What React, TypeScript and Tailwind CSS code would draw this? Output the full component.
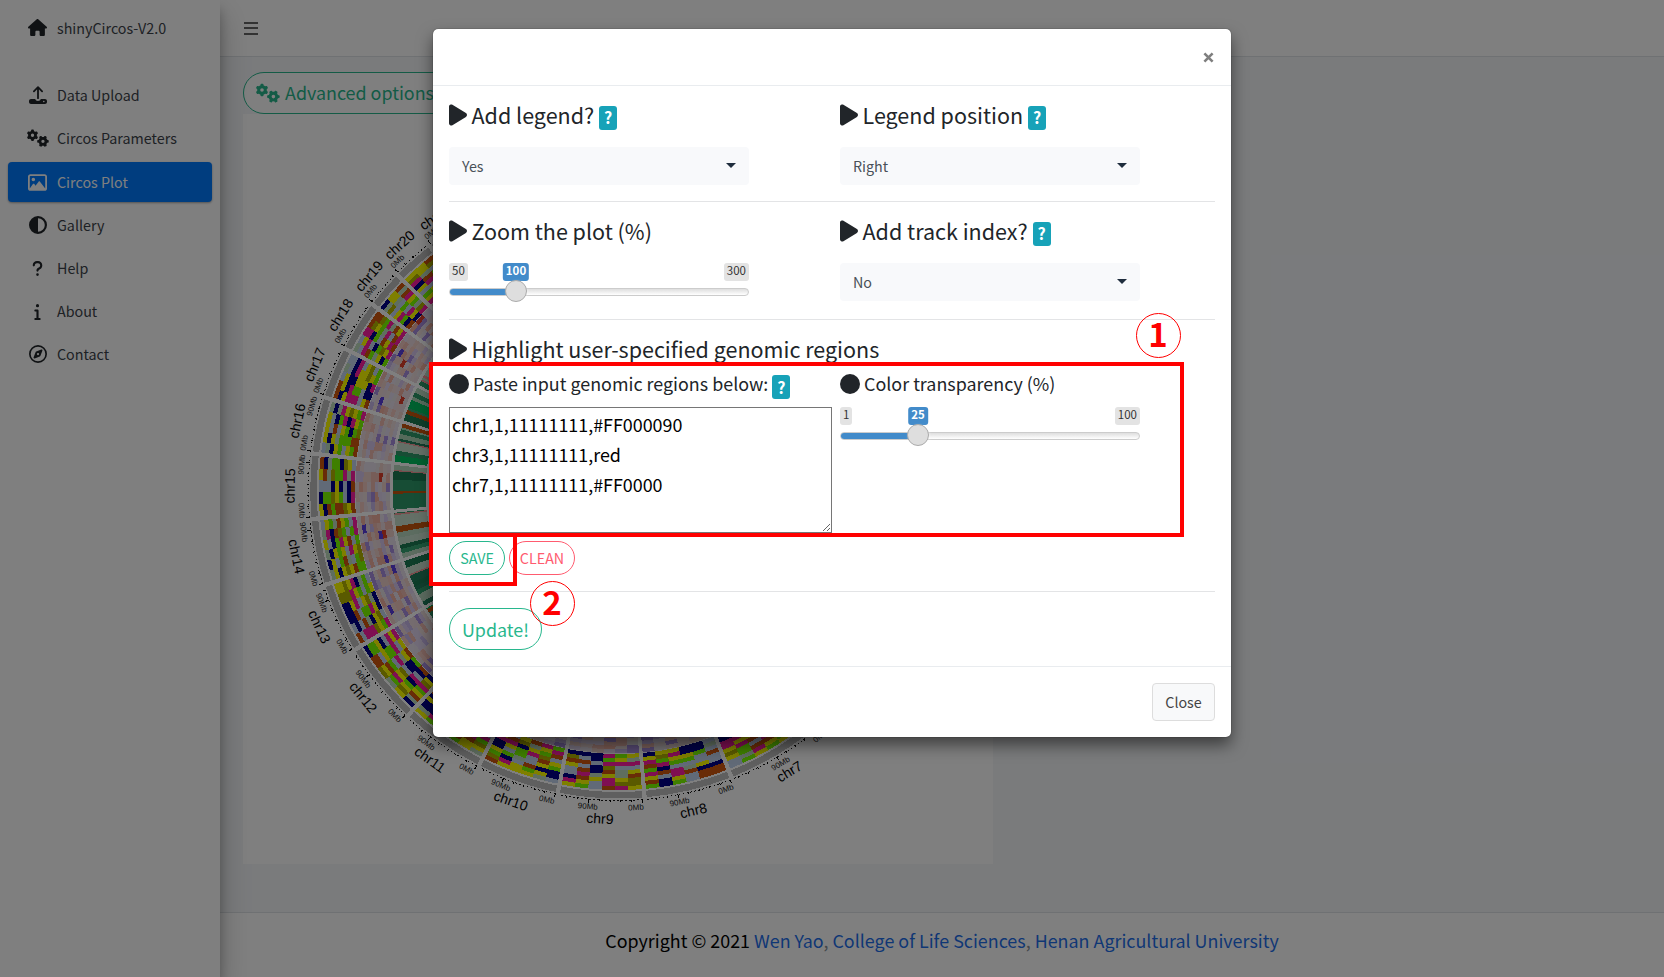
import React from "react";
import {
  FaHouse, FaGears, FaRegImage, FaCircleHalfStroke, FaQuestion, FaInfo, FaRegCompass, FaPlay, FaCircle,
} from "react-icons/fa6";

/* ---------- circos plot ---------- */

const CX = 375.8;
const CY = 376;
const COLORS: Record<string, string> = {
  Y: "#ffff00", O: "#b5b500", G: "#7fff00", M: "#ff1fa5", N: "#00008b", B: "#d2590f", L: "#c3d5ee", S: "#bfdcbf",
};

type Chr = { name: string; from: number; to: number; cells: string[]; long?: boolean };

/* each string is one column of the block track, from the rim inwards; columns run clockwise */
const CHROMOSOMES: Chr[] = [
  { name: "chr7", from: 49, to: 68.6, long: true, cells: ["YOGMBYLNG", "OYGBMLYNS", "YGBMOYLGN", "GYBMLOYGM", "YMBLBYMOG", "GSGGMYMNN", "LLYOYMMNN"] },
  { name: "chr8", from: 68.6, to: 85.2, long: true, cells: ["BBNLLBLSL", "BBNYLLGNN", "LLBSLGYNN", "GYMMLGYMY", "NNLBNMGOY", "GBYMGBMYN"] },
  { name: "chr9", from: 85.2, to: 101.4, long: true, cells: ["YOOBYLMSY", "MOYSSLMYG", "BMMYBOMGM", "LLYSNNLNN", "GYBMBLBLN", "YMNLLYBON"] },
  { name: "chr10", from: 101.4, to: 116.9, long: true, cells: ["LNNGYLBMG", "SYNYBOGYM", "YGBLLMYSB", "YYLSGGNOY", "YMNGLYMBL", "BOGYNNMYL"] },
  { name: "chr11", from: 116.9, to: 133.1, long: true, cells: ["SYOGMLYBN", "YYBMLGYOM", "GBBLYMNGL", "YOLNBMGYS", "GMNYLOBMG", "YSNNYNBGY"] },
  { name: "chr12", from: 133.1, to: 148.8, long: true, cells: ["NSBYGMOYN", "YOYGNMLNB", "SGMYOLNNG", "OYBGLMSYB", "BBLYGGMLY", "NGGYNLMYM"] },
  { name: "chr13", from: 148.8, to: 162.1, long: true, cells: ["BLMMMOYGM", "LNLBSNYOL", "NNBLGGMYN", "NNYMLYOSN", "OOOMYGLGY", "YYOYMNSGL"] },
  { name: "chr14", from: 162.1, to: 174.6, long: true, cells: ["SYNYOYBGG", "NYLGBSLGO", "SNYGYLMYO", "YLNGMYBLG", "SMNBOGLGM", "LYGSBYGLM"] },
  { name: "chr15", from: 174.6, to: 186.8, long: true, cells: ["YNBGBBOYB", "NGGOYGLNM", "LLLNYNLNB", "YBSOGGMSM", "BNSGGNOYL"] },
  { name: "chr16", from: 186.8, to: 197.5, long: true, cells: ["LSNYGLYGB", "YNYSGGGBB", "YLBLYGNGO", "YLNGMNMYG", "SNSMYOYGM"] },
  { name: "chr17", from: 197.5, to: 207.3, cells: ["BNYMMMLYB", "BYNMGGLNN", "LYNNYYYNM", "SLNMYYOYG", "LLNMLYOLG"] },
  { name: "chr18", from: 207.3, to: 217, cells: ["SLMBGSYNG", "LYMLNGOYM", "MMNGLBYMB", "BOYGSMLBM", "BBOGMSBYM"] },
  { name: "chr19", from: 217, to: 224.2, cells: ["NSOLYMGNB", "YYSLGLMYN", "BSBMYGSOM"] },
  { name: "chr20", from: 224.2, to: 232.2, cells: ["YOMNYLGYM", "YYSBMLYGO", "BOLGYBMSY"] },
  { name: "chr21", from: 232.2, to: 240, cells: ["GYMNBLYGO", "YSMGNLBYM"] },
];

const RAD = Math.PI / 180;
const pt = (r: number, a: number) => `${(CX + r * Math.cos(a * RAD)).toFixed(2)} ${(CY + r * Math.sin(a * RAD)).toFixed(2)}`;
const wedge = (r0: number, r1: number, a0: number, a1: number) =>
  `M${pt(r1, a0)}A${r1} ${r1} 0 0 1 ${pt(r1, a1)}L${pt(r0, a1)}A${r0} ${r0} 0 0 0 ${pt(r0, a0)}Z`;

function random(seed: number) {
  let s = seed;
  return () => {
    s = (s * 16807) % 2147483647;
    return s / 2147483647;
  };
}

const HEAT = ["#efd9d9", "#e8e0ec", "#f3c9c0", "#e2d6f0", "#eebbb0", "#d8c8ee", "#ead9df", "#ecdcdc", "#f0b0a0", "#c9b8ea", "#e6e0e4", "#efd0cb", "#e4dcf0", "#a88ee0"];
const STRIPES = ["#2f9a6a", "#a9d4b5", "#1d7d55", "#c9dfcc", "#c9560f", "#38a775", "#c9e0cf", "#00c060", "#237f5c", "#2f9a6a", "#b8d9c0", "#c9560f"];

function Sector({ chr, seed }: { chr: Chr; seed: number }) {
  const a0 = chr.from + 0.4;
  const a1 = chr.to - 0.4;
  const span = a1 - a0;
  const rnd = random(seed * 7919 + 13);
  const cells = chr.cells;
  const step = span / cells.length;
  const rowH = 36 / 9;

  const heat: React.ReactElement[] = [];
  for (let c = 0; c < cells.length; c++) {
    for (let r = 0; r < 9; r++) {
      const v = rnd();
      const fill = v > 0.985 ? "#e0402c" : v > 0.965 ? "#5a3fe0" : HEAT[Math.floor(rnd() * HEAT.length)];
      heat.push(<path key={`${c}-${r}`} d={wedge(229 + r * 3.8, 233 + r * 3.8, a0 + c * step, a0 + (c + 1) * step)} fill={fill} />);
    }
  }

  const stripes: React.ReactElement[] = [];
  for (let a = a0, i = 0; a < a1; i++) {
    const w = 0.3 + rnd() * 1.9;
    const fill = w < 0.45 ? "#f09a9a" : STRIPES[Math.floor(rnd() * STRIPES.length)];
    stripes.push(<path key={i} d={wedge(193, 226, a, Math.min(a + w, a1))} fill={fill} />);
    a += w;
  }

  const inner: React.ReactElement[] = [];
  for (let c = 0; c < cells.length * 2; c++) {
    inner.push(
      <path key={c} d={wedge(170, 190, a0 + (c * step) / 2, a0 + ((c + 1) * step) / 2)} fill={["#b9a5ea", "#e8c8c8", "#5a3fe0", "#e4dcf0"][Math.floor(rnd() * 4)]} />,
    );
  }

  const ticks: React.ReactElement[] = [];
  for (let a = a0, i = 0; a <= a1; a += 2, i++) {
    ticks.push(<path key={i} d={`M${pt(310, a)}L${pt(i % 5 === 0 ? 314 : 312, a)}`} stroke="#000" strokeWidth="1" />);
  }

  const label = (text: string, a: number, r: number, cls: string) => (
    <text
      transform={`translate(${pt(r, a)}) rotate(${a > 180 ? a + 90 : a - 90})`}
      textAnchor="middle"
      dominantBaseline="central"
      className={cls}
    >
      {text}
    </text>
  );

  return (
    <g>
      <path d={wedge(302, 308.5, a0, a1)} fill="#bebebe" />
      {cells.map((col, c) =>
        col.split("").map((k, r) => (
          <path
            key={`${c}-${r}`}
            d={wedge(300 - (r + 1) * rowH, 300 - r * rowH, a0 + c * step, a0 + (c + 1) * step)}
            fill={COLORS[k]}
          />
        )),
      )}
      {heat}
      {stripes}
      {inner}
      <path d={`M${pt(310.5, a0)}A310.5 310.5 0 0 1 ${pt(310.5, a1)}`} fill="none" stroke="#000" strokeWidth="0.9" strokeDasharray="1.5 2.5" />
      {ticks}
      {label(chr.name, (a0 + a1) / 2, 329, "text-[14px] fill-black")}
      {label("0Mb", a0 + 1.3, 318, "text-[8px] fill-[#222]")}
      {chr.long && label("90Mb", Math.min(a0 + 10, a1 - 1.8), 318, "text-[8px] fill-[#222]")}
    </g>
  );
}

function CircosPlot() {
  return (
    <svg width="750" height="750" viewBox="0 0 750 750" className="block font-['Liberation_Sans',sans-serif]" shapeRendering="crispEdges">
      {CHROMOSOMES.map((c, i) => (
        <Sector key={c.name} chr={c} seed={i + 1} />
      ))}
    </svg>
  );
}

/* ---------- page chrome ---------- */

function UploadIcon() {
  return (
    <svg width="18" height="18" viewBox="0 0 18 18" fill="none">
      <path d="M9 12.2V1.6M4.9 5.3L9 1.2l4.1 4.1" stroke="currentColor" strokeWidth="1.8" strokeLinecap="round" strokeLinejoin="round" />
      <path fillRule="evenodd" fill="currentColor" d="M2 13h4.200c.3 1.200 1.400 1.900 2.800 1.900s2.500-.7 2.800-1.900H16c1.100 0 2 .9 2 2v1c0 1.100-.9 2-2 2H2c-1.100 0-2-.9-2-2v-1c0-1.100.9-2 2-2zm12.800 1.700a.8.8 0 1 0 0 1.600.8.8 0 0 0 0-1.600z" />
    </svg>
  );
}

const NAV = [
  { label: "Data Upload", icon: <UploadIcon /> },
  { label: "Circos Parameters", icon: <FaGears size={22} /> },
  { label: "Circos Plot", icon: <FaRegImage size={19} />, active: true },
  { label: "Gallery", icon: <FaCircleHalfStroke size={18} /> },
  { label: "Help", icon: <FaQuestion size={17} /> },
  { label: "About", icon: <FaInfo size={17} /> },
  { label: "Contact", icon: <FaRegCompass size={18} /> },
];

function Sidebar() {
  return (
    <aside className="relative z-10 h-full w-[220px] shrink-0 bg-white text-[#3c434a] shadow-[0_14px_28px_rgba(0,0,0,0.25),0_10px_10px_rgba(0,0,0,0.22)]">
      <div className="flex h-[55px] items-center pl-[26px]">
        <span className="flex w-[23px] justify-center text-[#212529]"><FaHouse size={19} /></span>
        <span className="ml-2 text-[14.3px] leading-6">shinyCircos-V2.0</span>
      </div>
      <nav className="mt-[20px] flex flex-col gap-[3px] px-2">
        {NAV.map((n) => (
          <div
            key={n.label}
            className={
              n.active
                ? "mt-px flex h-[40px] items-center rounded bg-[#007bff] pl-[18px] text-white shadow-[0_1px_3px_rgba(0,0,0,0.12),0_1px_2px_rgba(0,0,0,0.24)]"
                : "flex h-[40px] items-center pl-[18px]"
            }
          >
            <span className={n.active ? "flex w-[23px] justify-center text-white" : "flex w-[23px] justify-center text-[#212529]"}>{n.icon}</span>
            <span className="ml-2 text-[14.3px] leading-6">{n.label}</span>
          </div>
        ))}
      </nav>
    </aside>
  );
}

/* ---------- dialog parts ---------- */

function HelpBadge() {
  return (
    <span className="mt-[3px] flex h-6 w-[18px] items-center justify-center rounded-[3px] bg-[#17a2b8] pb-px text-[16px] leading-6 font-bold text-white">?</span>
  );
}

function Heading({ children, help }: { children: string; help?: boolean }) {
  return (
    <div className="flex h-[30px] items-center">
      <FaPlay size={24} className="-mt-[2px] -ml-[3px] shrink-0 text-[#212529]" />
      <h3 className="-mt-[2px] ml-[1.5px] text-[21.5px] leading-[30px] whitespace-nowrap">{children}</h3>
      {help && <span className="ml-[5px]"><HelpBadge /></span>}
    </div>
  );
}

function Select({ value }: { value: string }) {
  return (
    <div className="mt-[16px] flex h-[38px] w-[300px] items-center justify-between rounded bg-[#f8f9fb] pr-[13px] pl-[13px] text-[14.3px] text-[#495057]">
      <span>{value}</span>
      <span className="-mt-[2px] h-0 w-0 border-x-[5px] border-t-[5px] border-x-transparent border-t-[#1f2d3d]" />
    </div>
  );
}

function Slider({ min, max, value, at }: { min: string; max: string; value: string; at: number }) {
  return (
    <div className="relative h-[40px] w-[300px] text-[11.5px] leading-[15px] text-[#333]">
      <div className="flex justify-between">
        <span className="h-[18px] rounded-[3px] bg-[#e3e3e3] px-[3px]">{min}</span>
        <span className="h-[18px] rounded-[3px] bg-[#e3e3e3] px-[3px]">{max}</span>
      </div>
      <div className="mt-[7px] h-2 w-full overflow-hidden rounded-full border border-[#ccc] bg-gradient-to-b from-[#dedede] to-white">
        <div className="-mt-px -ml-px h-2 bg-[#428bca]" style={{ width: at }} />
      </div>
      <span className="absolute top-0 h-[18px] -translate-x-1/2 rounded-[3px] bg-[#428bca] px-[3px] font-bold text-white" style={{ left: at }}>{value}</span>
      <span className="absolute top-[17px] h-[22px] w-[22px] -translate-x-1/2 rounded-full border border-[#ababab] bg-[#dedede] shadow-[1px_1px_3px_rgba(255,255,255,0.3)]" style={{ left: at }} />
    </div>
  );
}

function Dialog() {
  return (
    <div className="absolute top-[29px] left-[433px] z-30 flex h-[708px] w-[798px] flex-col rounded-[5px] bg-white text-[#212529] shadow-[0_0_1px_rgba(0,0,0,0.8),0_8px_16px_rgba(0,0,0,0.5)]">
      <div className="flex h-[57px] items-center justify-end border-b border-[#e9ecef] pr-[17px]">
        <svg width="11" height="11" viewBox="0 0 11 11" aria-label="Close dialog">
          <path d="M1.400 1.400l8.200 8.200M9.600 1.400L1.400 9.600" stroke="#7f7f7f" strokeWidth="2.600" fill="none" />
        </svg>
      </div>

      <div className="flex h-[580px] flex-col px-4">
        <div className="flex h-[116px] border-b border-[#e3e4e6] pt-[15px]">
          <div className="w-[391px]"><Heading help>Add legend?</Heading><Select value="Yes" /></div>
          <div><Heading help>Legend position</Heading><Select value="Right" /></div>
        </div>
        <div className="flex h-[118px] border-b border-[#e3e4e6] pt-[15px]">
          <div className="w-[391px]">
            <Heading>Zoom the plot (%)</Heading>
            <div className="mt-[16px]"><Slider min="50" max="300" value="100" at={67} /></div>
          </div>
          <div><Heading help>Add track index?</Heading><Select value="No" /></div>
        </div>
        <div className="h-[272px] border-b border-[#e3e4e6] pt-[15px]">
          <Heading>Highlight user-specified genomic regions</Heading>
          <div className="flex">
            <div className="w-[391px]">
              <div className="flex h-[42px] items-center pb-px">
                <FaCircle size={20} className="-mt-[4px]" />
                <h4 className="-mt-[5px] ml-1 text-[17.9px] leading-6">Paste input genomic regions below:</h4>
                <span className="ml-1"><HelpBadge /></span>
              </div>
              <textarea
                className="block h-[126px] w-[383px] border border-[#767676] bg-white px-[2px] pt-px text-[17.9px] leading-[30px] text-black"
                defaultValue={"chr1,1,11111111,#FF000090\nchr3,1,11111111,red\nchr7,1,11111111,#FF0000"}
              />
              <div className="mt-[8px] flex gap-[4px]">
                <button className="h-[34px] w-[56px] rounded-full border border-[#28b78d] text-[14.3px] text-[#28b78d]">SAVE</button>
                <button className="h-[34px] w-[66px] rounded-full border border-[#ff5b6f] text-[14.3px] text-[#ff5b6f]">CLEAN</button>
              </div>
            </div>
            <div>
              <div className="flex h-[42px] items-center pb-px">
                <FaCircle size={20} className="-mt-[4px]" />
                <h4 className="-mt-[5px] ml-1 text-[17.9px] leading-6">Color transparency (%)</h4>
              </div>
              <Slider min="1" max="100" value="25" at={78} />
            </div>
          </div>
        </div>
        <button className="mt-[16px] h-[42px] w-[93px] rounded-full border border-[#28b78d] text-[17.9px] text-[#28b78d]">Update!</button>
      </div>

      <div className="flex flex-1 items-center justify-end border-t border-[#e9ecef] pr-4">
        <button className="h-[38px] w-[63px] rounded border border-[#ddd] bg-[#f8f9fa] text-[14.3px] text-[#444]">Close</button>
      </div>
    </div>
  );
}

/* ---------- annotations ---------- */

function Annotations() {
  return (
    <div className="pointer-events-none absolute inset-0 z-40 font-bold text-[#ff0000]">
      <div className="absolute top-[362px] left-[429px] h-[175px] w-[755px] border-4 border-[#ff0000]" />
      <div className="absolute top-[533px] left-[429px] h-[53px] w-[88px] border-4 border-[#ff0000]" />
      <div className="absolute top-[313px] left-[1135.5px] flex h-[45px] w-[45px] items-center justify-center rounded-full border border-[#ff0000] pb-[4px] text-[33px] leading-none">1</div>
      <div className="absolute top-[581px] left-[529.5px] flex h-[45px] w-[45px] items-center justify-center rounded-full border border-[#ff0000] pb-[4px] text-[33px] leading-none">2</div>
    </div>
  );
}

export default function App() {
  return (
    <div className="relative flex h-[977px] w-[1664px] overflow-hidden bg-[#f4f6f9] font-['Noto_Sans_CJK_SC',sans-serif]">
      <Sidebar />
      <div className="flex min-w-0 flex-1 flex-col">
        <header className="flex h-[57px] items-center border-b border-[#dee2e6] bg-white pl-6">
          <span className="flex flex-col gap-[3.500px]">
            <span className="h-[2px] w-[14px] bg-[#666]" />
            <span className="h-[2px] w-[14px] bg-[#666]" />
            <span className="h-[2px] w-[14px] bg-[#666]" />
          </span>
        </header>
        <main className="flex-1 pt-[15px] pl-[23px]">
          <button className="flex h-[42px] w-[215px] items-center rounded-full border border-[#28b78d] bg-white pl-[12px] text-[17.9px] whitespace-nowrap text-[#28b78d]">
            <FaGears size={24} />
            <span className="-mt-[2px] ml-[5px]">Advanced options</span>
          </button>
          <div className="h-[750px] w-[750px] bg-white"><CircosPlot /></div>
        </main>
        <footer className="flex h-[65px] items-center justify-center border-t border-[#dee2e6] bg-white pb-[9px] text-[17.9px] text-black">
          <p className="whitespace-nowrap">
            Copyright © 2021 <a className="text-[#1f6feb]">Wen Yao</a><span className="text-[#869099]">, </span>
            <a className="text-[#1f6feb]">College of Life Sciences</a><span className="text-[#869099]">, </span>
            <a className="text-[#1f6feb]">Henan Agricultural University</a>
          </p>
        </footer>
      </div>
      <div className="absolute inset-0 z-20 bg-black/50" />
      <Dialog />
      <Annotations />
    </div>
  );
}
